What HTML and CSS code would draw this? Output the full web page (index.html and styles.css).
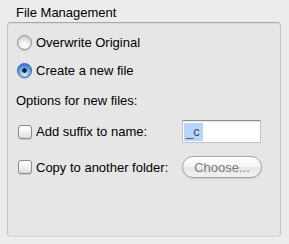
FILE: index.html
```html
<!DOCTYPE html>
<html lang="en">
<head>
    <meta charset="UTF-8">
    <meta name="viewport" content="width=device-width, initial-scale=1.0">
    <title>File Management</title>
    <link rel="stylesheet" href="styles.css">
</head>
<body>
    <div class="panel">
        <div class="legend">File Management</div>
        <div class="group">
            <label class="row radio-row">
                <span class="radio"></span>
                <span>Overwrite Original</span>
            </label>
            <label class="row radio-row">
                <span class="radio checked"></span>
                <span>Create a new file</span>
            </label>
            <div class="options">Options for new files:</div>
            <div class="row check-row first">
                <span class="check"></span>
                <span>Add suffix to name:</span>
                <div class="field"><span class="selected">_c</span></div>
            </div>
            <div class="row check-row second">
                <span class="check"></span>
                <span>Copy to another folder:</span>
                <button class="choose" disabled>Choose...</button>
            </div>
        </div>
    </div>
</body>
</html>
```

FILE: styles.css
```css
body {
    font-family: 'Liberation Sans', Arial, sans-serif;
    font-size: 13px;
    background-color: #ececec;
    color: #000;
    margin: 0;
    padding: 0;
}
.panel {
    width: 289px;
    height: 244px;
    box-sizing: border-box;
    padding: 5px 8px 7px 7px;
    display: flex;
    flex-direction: column;
}
.legend {
    line-height: 16px;
    padding-left: 9px;
    margin-bottom: 1px;
}
.group {
    flex: 1;
    background-color: #e6e6e6;
    border: 1px solid #c4c4c4;
    border-top-color: #a8a8a8;
    border-bottom-color: #cfcfcf;
    border-radius: 4px;
    box-shadow: inset 0 1px 1px rgba(0,0,0,0.06), 0 1px 0 #f8f8f8;
    padding: 8px 0 0 0;
}
.row {
    display: flex;
    align-items: center;
    height: 22px;
}
.radio-row {
    padding-left: 9px;
    gap: 4px;
}
.radio-row + .radio-row {
    margin-top: 6px;
}
.radio {
    width: 15px;
    height: 15px;
    box-sizing: border-box;
    border-radius: 50%;
    border: 1px solid #8e8e8e;
    background: radial-gradient(circle at 50% 75%, #ffffff 0, #f2f2f2 35%, #cfcfcf 80%);
    box-shadow: 0 1px 1px rgba(0,0,0,0.15);
}
.radio.checked {
    border-color: #3c5f9b;
    background: radial-gradient(circle at 50% 50%, #1b1b2e 0, #1b1b2e 2px, transparent 2.5px),
                radial-gradient(circle at 50% 80%, #c9ecff 0, #6fb2ee 45%, #2c6ccf 90%);
}
.options {
    line-height: 16px;
    margin-top: 12px;
    padding-left: 8px;
}
.check-row {
    display: grid;
    grid-template-columns: 14px 142px auto;
    column-gap: 4px;
    align-items: center;
    padding-left: 10px;
}
.check-row.first {
    height: 23px;
    margin-top: 11px;
}
.check-row.second {
    margin-top: 13px;
}
.check {
    width: 14px;
    height: 14px;
    box-sizing: border-box;
    border: 1px solid #8c8c8c;
    border-radius: 3px;
    background: linear-gradient(#ffffff, #f1f1f1 50%, #dcdcdc);
    box-shadow: 0 1px 1px rgba(0,0,0,0.12);
}
.field {
    width: 79px;
    height: 23px;
    box-sizing: border-box;
    background-color: #fff;
    border: 1px solid #c2c2c2;
    border-top-color: #8f8f8f;
    box-shadow: inset 0 1px 1px rgba(0,0,0,0.1);
    padding: 2px 0 0 1px;
}
.selected {
    display: inline-block;
    background-color: #b5d5ff;
    color: #4a4a4a;
    line-height: 18px;
    padding: 0 3px 0 2px;
}
.choose {
    width: 80px;
    height: 22px;
    font-family: 'Liberation Sans', Arial, sans-serif;
    font-size: 13px;
    color: #7a7a7a;
    border: 1px solid #a4a4a4;
    border-radius: 11px;
    background: linear-gradient(#ffffff, #f4f4f4 50%, #e6e6e6 51%, #f2f2f2);
    box-shadow: 0 1px 1px rgba(0,0,0,0.1);
    padding: 0;
}
```
